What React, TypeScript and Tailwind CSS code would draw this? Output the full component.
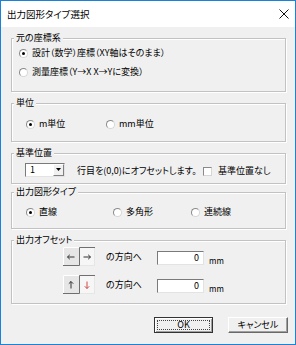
import React from 'react';

const Radio: React.FC<{ checked?: boolean }> = ({ checked }) => (
  <span className="flex h-[9px] w-[9px] shrink-0 items-center justify-center rounded-full border border-t-[#8a8a8a] border-l-[#8a8a8a] border-r-[#d6d6d6] border-b-[#d6d6d6] bg-white">
    {checked && <span className="h-[3px] w-[3px] rounded-full bg-black" />}
  </span>
);

const RadioItem: React.FC<{ label: string; checked?: boolean; className?: string }> = ({
  label,
  checked,
  className = '',
}) => (
  <div className={`flex h-[14px] items-center gap-[4px] leading-[14px] ${className}`}>
    <Radio checked={checked} />
    <span>{label}</span>
  </div>
);

const Group: React.FC<{ title: string; className?: string; children: React.ReactNode }> = ({
  title,
  className = '',
  children,
}) => (
  <div
    className={`relative border border-[#c2c2c2] shadow-[inset_1px_1px_0_#fff,1px_1px_0_#fff] ${className}`}
  >
    <span className="absolute left-[2px] top-[-7px] bg-[#f0f0f0] px-[2px] leading-[12px]">{title}</span>
    {children}
  </div>
);

const Toggle: React.FC<{ vertical?: boolean }> = ({ vertical }) => (
  <svg width="32" height="19" viewBox="0 0 32 19" className="shrink-0">
    <rect x="0" y="0" width="32" height="19" fill="#e6e6e6" />
    <rect x="16" y="1" width="15" height="17" fill="#f6f6f6" />
    <path d="M0.5 18V0.5H16" fill="none" stroke="#ffffff" />
    <path d="M0 18.5H16.5V0.5H32" fill="none" stroke="#6f6f6f" />
    {vertical ? (
      <>
        <path d="M8 6.5V13.5M8 6.5L5.8 8.7M8 6.5L10.2 8.7" fill="none" stroke="#333" />
        <path d="M24 6.5V13.5M24 13.5L21.8 11.3M24 13.5L26.2 11.3" fill="none" stroke="#d04848" />
      </>
    ) : (
      <>
        <path d="M4.5 10H11.5M4.5 10L6.8 7.8M4.5 10L6.8 12.2" fill="none" stroke="#333" />
        <path d="M20.5 10H27.5M27.5 10L25.2 7.8M27.5 10L25.2 12.2" fill="none" stroke="#333" />
      </>
    )}
  </svg>
);

const OffsetRow: React.FC<{ vertical?: boolean }> = ({ vertical }) => (
  <div className="flex h-[19px] items-start">
    <Toggle vertical={vertical} />
    <span className="ml-[11px] w-[51px] leading-[19px]">の方向へ</span>
    <div className="mt-[4px] h-[14px] w-[47px] border border-t-[#7a7a7a] border-l-[#7a7a7a] border-r-[#e3e3e3] border-b-[#e3e3e3] bg-white pr-[4px] text-right leading-[12px]">
      0
    </div>
    <span className="ml-[5px] mt-[7px] text-[8px] leading-[14px]">mm</span>
  </div>
);

const App: React.FC = () => {
  return (
    <div className="flex h-[345px] w-[296px] flex-col border border-[#1883d7] bg-[#f0f0f0] font-['Noto_Sans_CJK_JP',sans-serif] text-[9px] text-black [font-feature-settings:'palt']">
      <div className="flex h-[26px] shrink-0 items-center justify-between bg-white pl-[6px] pr-[6px]">
        <span className="text-[9.5px]">出力図形タイプ選択</span>
        <svg width="10" height="10" viewBox="0 0 10 10">
          <path d="M0.5 0.5L9.5 9.5M9.5 0.5L0.5 9.5" stroke="#111" strokeWidth="1" />
        </svg>
      </div>

      <div className="flex flex-col pl-[10px] pr-[9px]">
        <Group title="元の座標系" className="mt-[11px] h-[54px]">
          <div className="flex flex-col gap-[5px] pl-[7px] pt-[7px]">
            <RadioItem checked label="設計（数学）座標（XY軸はそのまま）" />
            <RadioItem label="測量座標（Y→X X→Yに変換）" />
          </div>
        </Group>

        <Group title="単位" className="mt-[11px] h-[39px]">
          <div className="flex pl-[14px] pt-[13px]">
            <RadioItem checked label="m単位" className="w-[80px]" />
            <RadioItem label="mm単位" />
          </div>
        </Group>

        <Group title="基準位置" className="mt-[11px] h-[31px]">
          <div className="flex items-center pl-[13px] pt-[7px]">
            <div className="flex h-[14px] w-[40px] items-center border border-t-[#7a7a7a] border-l-[#7a7a7a] border-r-[#e3e3e3] border-b-[#e3e3e3] bg-white">
              <span className="flex-1 pl-[4px] leading-[12px]">1</span>
              <span className="flex h-[12px] w-[11px] items-center justify-center border border-t-white border-l-white border-r-[#808080] border-b-[#808080] bg-[#f0f0f0]">
                <svg width="5" height="3" viewBox="0 0 5 3">
                  <path d="M0 0H5L2.5 3Z" fill="#000" />
                </svg>
              </span>
            </div>
            <span className="ml-[12px] mt-[3px] w-[126px] leading-[14px]">行目を(0,0)にオフセットします。</span>
            <span className="mt-[4px] h-[9px] w-[9px] border border-t-[#8a8a8a] border-l-[#8a8a8a] border-r-[#d6d6d6] border-b-[#d6d6d6] bg-white" />
            <span className="ml-[6px] mt-[3px] leading-[14px]">基準位置なし</span>
          </div>
        </Group>

        <Group title="出力図形タイプ" className="mt-[8px] h-[37px]">
          <div className="flex pl-[14px] pt-[12px]">
            <RadioItem checked label="直線" className="w-[87px]" />
            <RadioItem label="多角形" className="w-[78px]" />
            <RadioItem label="連続線" />
          </div>
        </Group>

        <Group title="出力オフセット" className="mt-[11px] h-[64px]">
          <div className="flex flex-col gap-[9px] pl-[51px] pt-[6px]">
            <OffsetRow />
            <OffsetRow vertical />
          </div>
        </Group>
      </div>

      <div className="mt-[13px] flex justify-end gap-[15px] pr-[7px]">
        <div className="relative flex h-[16px] w-[59px] items-center justify-center border border-[#333] bg-[#f0f0f0] leading-[12px] shadow-[inset_1px_1px_0_#fff,inset_-1px_-1px_0_#a0a0a0]">
          <span className="absolute inset-[2px] border border-dotted border-[#444]" />
          OK
        </div>
        <div className="flex h-[16px] w-[60px] items-center justify-center border border-t-white border-l-white border-r-[#696969] border-b-[#696969] bg-[#f0f0f0] leading-[14px] shadow-[inset_-1px_-1px_0_#a0a0a0]">
          キャンセル
        </div>
      </div>
    </div>
  );
};

export default App;
